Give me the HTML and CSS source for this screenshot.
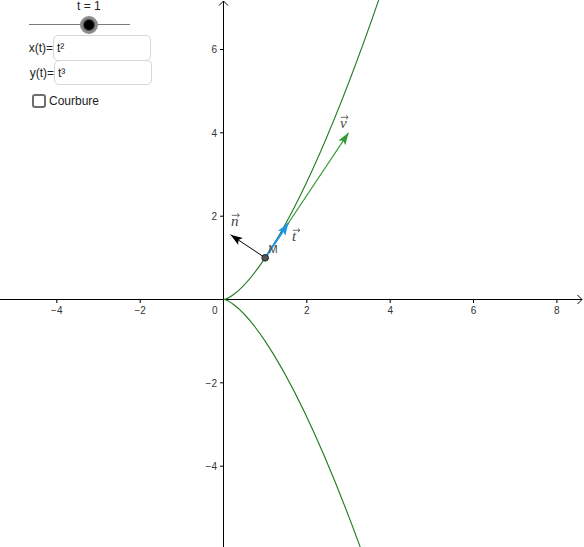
FILE: index.html
```html
<!DOCTYPE html>
<html>
<head>
<meta charset="utf-8">
<link rel="stylesheet" href="styles.css">
</head>
<body>
<div class="stage">
  <svg class="graph" width="584" height="547" viewBox="0 0 584 547" xmlns="http://www.w3.org/2000/svg">
    <defs>
      <marker id="ah-green" markerUnits="userSpaceOnUse" markerWidth="14" markerHeight="10" viewBox="-13 -5 14 10" refX="0" refY="0" orient="auto">
        <path d="M0,0 L-12,-4.2 L-9.5,0 L-12,4.2 Z" fill="#339933"/>
      </marker>
      <marker id="ah-blue" markerUnits="userSpaceOnUse" markerWidth="14" markerHeight="10" viewBox="-13 -5 14 10" refX="0" refY="0" orient="auto">
        <path d="M0,0 L-12,-4.5 L-9.5,0 L-12,4.5 Z" fill="#1e96e6"/>
      </marker>
      <marker id="ah-black" markerUnits="userSpaceOnUse" markerWidth="14" markerHeight="10" viewBox="-13 -5 14 10" refX="0" refY="0" orient="auto">
        <path d="M0,0 L-12,-4.2 L-9.5,0 L-12,4.2 Z" fill="#000"/>
      </marker>
    </defs>
    <!-- axes -->
    <g class="axes">
      <line x1="0" y1="299.5" x2="582" y2="299.5"/>
      <line x1="223.5" y1="1" x2="223.5" y2="547"/>
      <path d="M577.5,295 L582,299.5 L577.5,304" fill="none"/>
      <path d="M219,5.5 L223.5,1 L228,5.5" fill="none"/>
      <!-- x ticks -->
      <line x1="56.8" y1="299.5" x2="56.8" y2="303"/>
      <line x1="140.2" y1="299.5" x2="140.2" y2="303"/>
      <line x1="306.8" y1="299.5" x2="306.8" y2="303"/>
      <line x1="390.2" y1="299.5" x2="390.2" y2="303"/>
      <line x1="473.5" y1="299.5" x2="473.5" y2="303"/>
      <line x1="556.9" y1="299.5" x2="556.9" y2="303"/>
      <!-- y ticks -->
      <line x1="220" y1="49.5" x2="223.5" y2="49.5"/>
      <line x1="220" y1="132.8" x2="223.5" y2="132.8"/>
      <line x1="220" y1="216.2" x2="223.5" y2="216.2"/>
      <line x1="220" y1="382.8" x2="223.5" y2="382.8"/>
      <line x1="220" y1="466.2" x2="223.5" y2="466.2"/>
    </g>
    <g class="ticklabels">
      <text x="56.8" y="313.5" text-anchor="middle">−4</text>
      <text x="140.2" y="313.5" text-anchor="middle">−2</text>
      <text x="217.5" y="313.5" text-anchor="end">0</text>
      <text x="306.8" y="313.5" text-anchor="middle">2</text>
      <text x="390.2" y="313.5" text-anchor="middle">4</text>
      <text x="473.5" y="313.5" text-anchor="middle">6</text>
      <text x="556.9" y="313.5" text-anchor="middle">8</text>
      <text x="217" y="53.2" text-anchor="end">6</text>
      <text x="217" y="136.5" text-anchor="end">4</text>
      <text x="217" y="219.9" text-anchor="end">2</text>
      <text x="217" y="386.5" text-anchor="end">−2</text>
      <text x="217" y="469.9" text-anchor="end">−4</text>
    </g>
    <!-- curve x=t^2, y=t^3 -->
    <path class="curve" d="M390.18,-33.86 C279.06,299.5 223.5,299.5 223.5,299.5 C223.5,299.5 279.06,299.5 390.18,632.86"/>
    <!-- vectors -->
    <line class="vec-v" x1="265.17" y1="257.83" x2="348.51" y2="132.82" marker-end="url(#ah-green)"/>
    <line class="vec-n" x1="265.17" y1="257.83" x2="230.5" y2="234.72" marker-end="url(#ah-black)"/>
    <line class="vec-t" x1="265.17" y1="257.83" x2="288.28" y2="223.16" marker-end="url(#ah-blue)"/>
    <!-- point M -->
    <circle class="pt" cx="265.17" cy="257.83" r="3.3"/>
    <text class="ptlabel" x="268.5" y="252.5">M</text>
    <!-- vector labels -->
    <g class="veclabel">
      <text x="231" y="226">n</text>
      <path d="M231.8,215.3 H239.2 M237.2,213.4 L239.4,215.3 L237.2,217.2"/>
      <text x="292" y="241">t</text>
      <path d="M292.8,230.3 H299.8 M297.8,228.4 L300,230.3 L297.8,232.2"/>
      <text x="340" y="128">v</text>
      <path d="M340.8,117.3 H348 M346,115.4 L348.2,117.3 L346,119.2"/>
    </g>
  </svg>

  <div class="panel">
    <div class="slider">
      <div class="slider-label">t = 1</div>
      <div class="track"><span class="knob"></span></div>
    </div>
    <div class="row row-x">
      <span class="lbl">x(t)=</span>
      <div class="input">t²</div>
    </div>
    <div class="row row-y">
      <span class="lbl">y(t)=</span>
      <div class="input">t³</div>
    </div>
    <div class="check">
      <span class="box"></span>
      <span class="check-text">Courbure</span>
    </div>
  </div>
</div>
</body>
</html>
```

FILE: styles.css
```css
html, body {
  margin: 0;
  padding: 0;
  background: #fff;
}
.stage {
  position: relative;
  width: 584px;
  height: 547px;
  overflow: hidden;
  background: #fff;
}
.graph {
  display: block;
}
.axes line, .axes path {
  stroke: #000;
  stroke-width: 1;
}
.ticklabels text {
  font-family: "Liberation Sans", Arial, sans-serif;
  font-size: 10px;
  fill: #333;
}
.curve {
  fill: none;
  stroke: #1f7a1f;
  stroke-width: 1.1;
}
.vec-v {
  stroke: #339933;
  stroke-width: 1.1;
}
.vec-n {
  stroke: #000;
  stroke-width: 1;
}
.vec-t {
  stroke: #1e96e6;
  stroke-width: 2;
}
.pt {
  fill: #555;
  stroke: #222;
  stroke-width: 1;
}
.ptlabel {
  font-family: "Liberation Sans", Arial, sans-serif;
  font-size: 11px;
  fill: #444;
}
.veclabel text {
  font-family: "Liberation Serif", "Times New Roman", serif;
  font-style: italic;
  font-size: 15px;
  fill: #444;
}
.veclabel path {
  fill: none;
  stroke: #444;
  stroke-width: 0.8;
}

.panel {
  position: absolute;
  left: 0;
  top: 0;
  width: 170px;
  font-family: "Liberation Sans", Arial, sans-serif;
  font-size: 12px;
  color: #222;
}
.slider {
  padding-top: 1px;
}
.slider-label {
  margin-left: 77px;
  line-height: 10px;
  height: 10px;
}
.track {
  position: relative;
  margin-left: 29px;
  margin-top: 13px;
  width: 101px;
  height: 1px;
  background: #7a7a7a;
}
.knob {
  position: absolute;
  left: 51px;
  top: -8.5px;
  width: 12px;
  height: 12px;
  border-radius: 50%;
  background: #000;
  border: 3px solid #8c8c8c;
  box-shadow: inset 0 0 0 1px #555;
}
.row {
  display: flex;
  align-items: center;
}
.row-x {
  margin-top: 10px;
}
.row-y {
  margin-top: -1px;
}
.lbl {
  text-align: right;
  white-space: nowrap;
}
.row-x .lbl { width: 53px; }
.row-y .lbl { width: 54px; }
.input {
  box-sizing: border-box;
  width: 98px;
  border: 1px solid #d6d6d6;
  border-radius: 5px;
  padding-left: 3px;
  display: flex;
  align-items: center;
}
.row-x .input { height: 26px; }
.row-y .input { height: 25px; }
.check {
  display: flex;
  align-items: center;
  margin-top: 9px;
  margin-left: 32px;
}
.box {
  box-sizing: border-box;
  width: 14px;
  height: 14px;
  border: 2px solid #6e6e6e;
  border-radius: 3px;
  margin-right: 3px;
}
.check-text {
  line-height: 14px;
}
```
